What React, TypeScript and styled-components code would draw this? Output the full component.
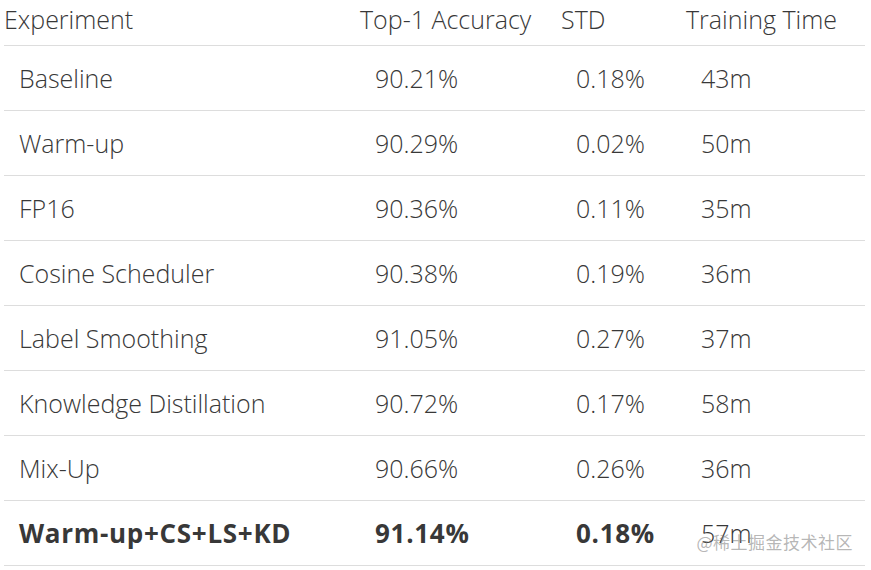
import styled, { createGlobalStyle } from 'styled-components';

const GlobalStyle = createGlobalStyle`
	html, body {
		margin: 0;
		padding: 0;
		background: #fff;
	}
	body {
		font-family: 'Open Sans', 'Noto Sans', sans-serif;
		color: #333;
	}
`;

/* Styled Components */
const Page = styled.div`
	position: relative;
	width: 871px;
	height: 570px;
	overflow: hidden;
`;

const Table = styled.table`
	margin-left: 4px;
	border-collapse: collapse;
	table-layout: fixed;
	width: 861px;
`;

const HeadCell = styled.th<{ $w: number }>`
	width: ${(p) => p.$w}px;
	height: 45px;
	padding: 0 0 6px 0;
	text-align: left;
	vertical-align: middle;
	font-size: 25px;
	font-weight: 300;
	color: #383838;
	border-bottom: 1px solid #ddd;
	box-sizing: border-box;
	white-space: nowrap;
`;

const Cell = styled.td<{ $bold?: boolean }>`
	height: 65px;
	padding: 0 0 0 15px;
	text-align: left;
	vertical-align: middle;
	font-size: ${(p) => (p.$bold ? 26 : 25)}px;
	font-weight: ${(p) => (p.$bold ? 700 : 300)};
	letter-spacing: ${(p) => (p.$bold ? 0.7 : 0)}px;
	color: #383838;
	border-bottom: 1px solid #ddd;
	box-sizing: border-box;
	white-space: nowrap;
`;

const Watermark = styled.div`
	position: absolute;
	right: 18px;
	top: 529px;
	font-family: 'Noto Sans CJK SC', sans-serif;
	font-size: 17px;
	color: rgba(120, 120, 120, 0.55);
	letter-spacing: 0.5px;
`;

/* Data */
interface Row {
	name: string;
	acc: string;
	std: string;
	time: string;
	bold?: boolean;
}

const columns = [
	{ title: 'Experiment', w: 356 },
	{ title: 'Top-1 Accuracy', w: 201 },
	{ title: 'STD', w: 125 },
	{ title: 'Training Time', w: 179 },
];

const rows: Row[] = [
	{ name: 'Baseline', acc: '90.21%', std: '0.18%', time: '43m' },
	{ name: 'Warm-up', acc: '90.29%', std: '0.02%', time: '50m' },
	{ name: 'FP16', acc: '90.36%', std: '0.11%', time: '35m' },
	{ name: 'Cosine Scheduler', acc: '90.38%', std: '0.19%', time: '36m' },
	{ name: 'Label Smoothing', acc: '91.05%', std: '0.27%', time: '37m' },
	{ name: 'Knowledge Distillation', acc: '90.72%', std: '0.17%', time: '58m' },
	{ name: 'Mix-Up', acc: '90.66%', std: '0.26%', time: '36m' },
	{ name: 'Warm-up+CS+LS+KD', acc: '91.14%', std: '0.18%', time: '57m', bold: true },
];

export default function App() {
	return (
		<>
			<GlobalStyle />
			<Page>
				<Table>
					<thead>
						<tr>
							{columns.map((c) => (
								<HeadCell key={c.title} $w={c.w}>
									{c.title}
								</HeadCell>
							))}
						</tr>
					</thead>
					<tbody>
						{rows.map((r) => (
							<tr key={r.name}>
								<Cell $bold={r.bold}>{r.name}</Cell>
								<Cell $bold={r.bold}>{r.acc}</Cell>
								<Cell $bold={r.bold}>{r.std}</Cell>
								{/* last row's time is not bold in the source */}
								<Cell>{r.time}</Cell>
							</tr>
						))}
					</tbody>
				</Table>
				<Watermark>@稀土掘金技术社区</Watermark>
			</Page>
		</>
	);
}
